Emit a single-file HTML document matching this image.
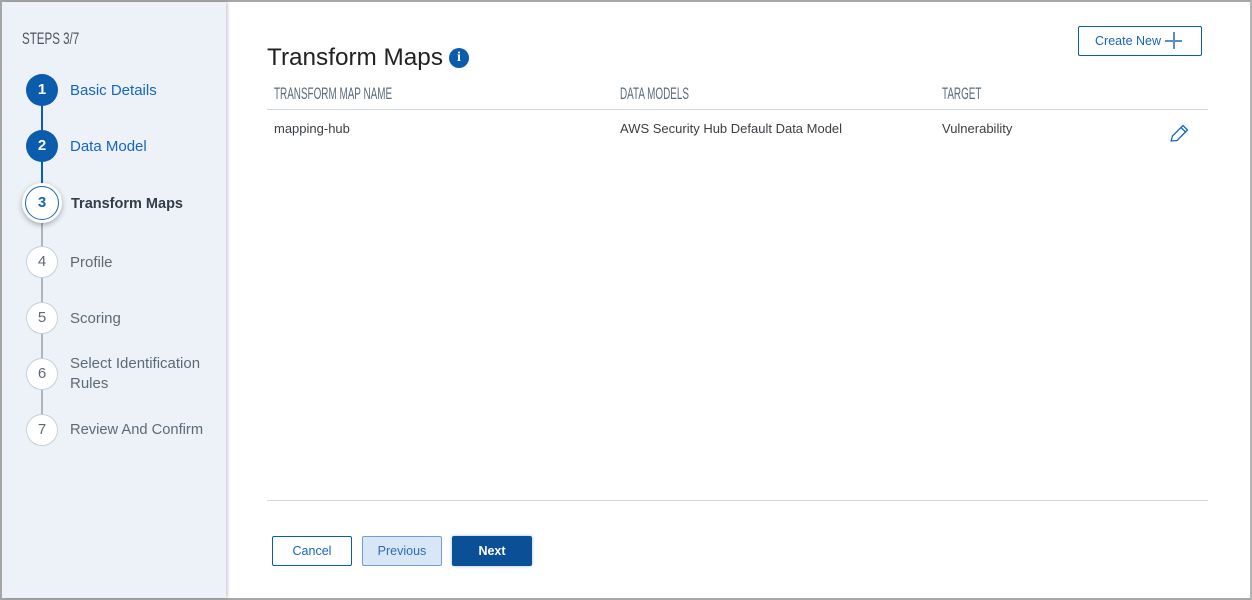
<!DOCTYPE html>
<html><head><meta charset="utf-8"><style>
*{box-sizing:border-box;margin:0;padding:0}
html,body{width:1252px;height:600px;overflow:hidden;background:#fff;font-family:"Liberation Sans",sans-serif}
.frame{position:absolute;left:0;top:0;width:1252px;height:600px;border:2px solid #a6a6a6;border-right-color:#b5b5b5}
.side{position:absolute;left:2px;top:2px;width:224px;height:596px;background:#edf2f9;box-shadow:2px 0 3px rgba(0,0,0,.18)}
.steps{position:absolute;left:22px;top:29px;font-size:17px;color:#4a5560;transform:scaleX(.68);transform-origin:0 0}
.line{position:absolute;left:41px;width:2px}
.c{position:absolute;width:32px;height:32px;border-radius:50%;left:26px;text-align:center;line-height:32px;font-size:15px}
.done{background:#0b5cad;color:#fff;font-weight:bold}
.todo{background:#fff;border:1px solid #c8d0d8;color:#5d6a75;line-height:30px}
.act{background:#fff;border:1.5px solid #1565c0;color:#1565c0;font-weight:bold;box-shadow:0 0 0 3px #fff,0 2px 6px 3px rgba(0,0,0,.3);line-height:31px;width:34px;height:34px;left:25px}
.lbl{position:absolute;left:70px;font-size:15px;color:#5d6a75}
.title{position:absolute;left:267px;top:44px;font-size:24.3px;color:#222}
.info{position:absolute;left:449px;top:48px;width:20px;height:20px;border-radius:50%;background:#0b5cad;color:#fff;font-family:"Liberation Serif",serif;font-weight:bold;font-size:14px;text-align:center;line-height:20px}
.th{position:absolute;top:85px;font-size:16.5px;color:#5a6b7b;transform:scaleX(.6);transform-origin:0 0}
.td{position:absolute;top:121px;font-size:13px;color:#3a3f44}
.hr{position:absolute;left:267px;width:941px;height:1px;background:#d3d8dd}
.btn{position:absolute;height:30px;font-size:12.5px;text-align:center;line-height:28px;border-radius:2px}
</style></head><body>
<div class="frame"></div>
<div class="side"></div>
<div class="steps">STEPS 3/7</div>
<div class="line" style="top:100px;height:90px;background:#0b5cad"></div>
<div class="line" style="top:215px;height:210px;background:#a9b5c0"></div>
<div class="c done" style="top:74px">1</div>
<div class="c done" style="top:130px">2</div>
<div class="c act" style="top:186px">3</div>
<div class="c todo" style="top:246px">4</div>
<div class="c todo" style="top:302px">5</div>
<div class="c todo" style="top:358px">6</div>
<div class="c todo" style="top:414px">7</div>
<div class="lbl" style="top:82px;color:#1565c0">Basic Details</div>
<div class="lbl" style="top:138px;color:#1565c0">Data Model</div>
<div class="lbl" style="top:196px;color:#333d47;font-weight:bold;left:71px;font-size:14.5px">Transform Maps</div>
<div class="lbl" style="top:254px">Profile</div>
<div class="lbl" style="top:310px">Scoring</div>
<div class="lbl" style="top:354px;line-height:20px">Select Identification<br>Rules</div>
<div class="lbl" style="top:422px;font-size:14.7px">Review And Confirm</div>

<div class="title">Transform Maps</div>
<div class="info">i</div>
<div class="btn" style="left:1078px;top:26px;width:124px;border:1px solid #0b5cad;color:#1565c0;line-height:28px;text-align:left;padding-left:16px">Create New</div>
<div style="position:absolute;left:1165px;top:40px;width:17px;height:1.5px;background:#5a8ccc"></div>
<div style="position:absolute;left:1173px;top:32px;width:1.5px;height:17px;background:#5a8ccc"></div>
<div class="th" style="left:274px">TRANSFORM MAP NAME</div>
<div class="th" style="left:620px">DATA MODELS</div>
<div class="th" style="left:942px">TARGET</div>
<div class="hr" style="top:109px"></div>
<div class="td" style="left:274px">mapping-hub</div>
<div class="td" style="left:620px">AWS Security Hub Default Data Model</div>
<div class="td" style="left:942px">Vulnerability</div>
<svg style="position:absolute;left:1169px;top:122px" width="22" height="22" viewBox="0 0 22 22"><path d="M2 19l1.5-5L14 3.5l4.5 4.5L8 18.5z M12 5.5l4.5 4.5" fill="none" stroke="#1565c0" stroke-width="1.3" stroke-linejoin="round"/></svg>
<div class="hr" style="top:500px"></div>
<div class="btn" style="left:272px;top:536px;width:80px;border:1px solid #0b5cad;color:#1565c0">Cancel</div>
<div class="btn" style="left:362px;top:536px;width:80px;border:1px solid #6f9fd6;background:#d9e6f5;color:#2d6cb5">Previous</div>
<div class="btn" style="left:452px;top:536px;width:80px;background:#0b4f96;color:#fff;font-weight:bold;line-height:30px;box-shadow:0 0 3px rgba(11,79,150,.4)">Next</div>
</body></html>
